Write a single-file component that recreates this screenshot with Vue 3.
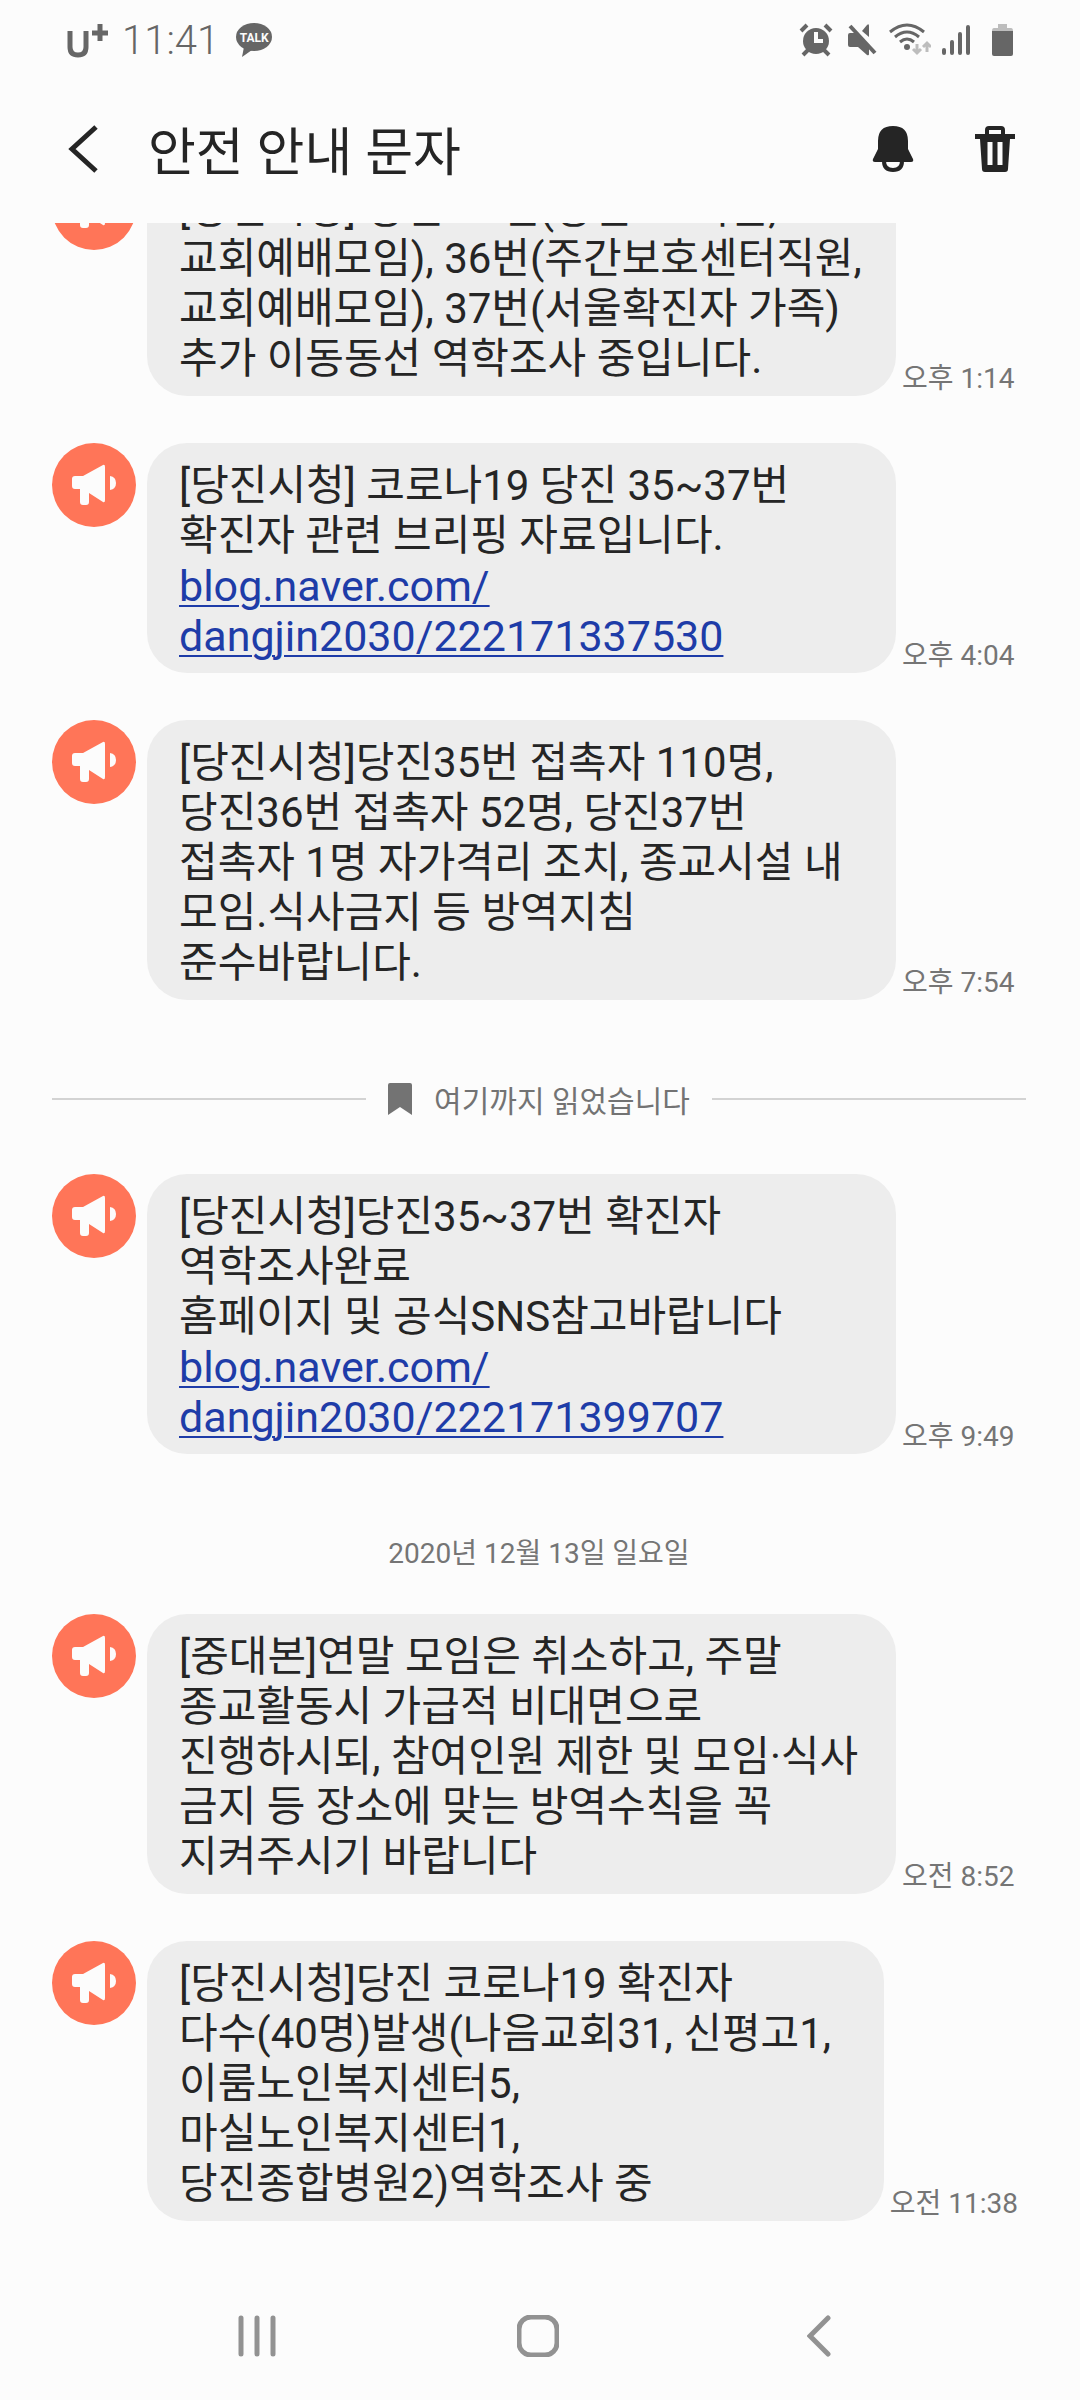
<script setup>
const feed = [
  {
    kind: 'message',
    text: '[당진시청] 당진 35번(당진 고 직원,\n교회예배모임), 36번(주간보호센터직원,\n교회예배모임), 37번(서울확진자 가족)\n추가 이동동선 역학조사 중입니다.',
    time: '오후 1:14',
  },
  {
    kind: 'message',
    text: '[당진시청] 코로나19 당진 35~37번\n확진자 관련 브리핑 자료입니다.',
    link: ['blog.naver.com/', 'dangjin2030/222171337530'],
    time: '오후 4:04',
  },
  {
    kind: 'message',
    text: '[당진시청]당진35번 접촉자 110명,\n당진36번 접촉자 52명, 당진37번\n접촉자 1명 자가격리 조치, 종교시설 내\n모임.식사금지 등 방역지침\n준수바랍니다.',
    time: '오후 7:54',
  },
  { kind: 'read', text: '여기까지 읽었습니다' },
  {
    kind: 'message',
    text: '[당진시청]당진35~37번 확진자\n역학조사완료\n홈페이지 및 공식SNS참고바랍니다',
    link: ['blog.naver.com/', 'dangjin2030/222171399707'],
    time: '오후 9:49',
  },
  { kind: 'date', text: '2020년 12월 13일 일요일' },
  {
    kind: 'message',
    text: '[중대본]연말 모임은 취소하고, 주말\n종교활동시 가급적 비대면으로\n진행하시되, 참여인원 제한 및 모임·식사\n금지 등 장소에 맞는 방역수칙을 꼭\n지켜주시기 바랍니다',
    time: '오전 8:52',
  },
  {
    kind: 'message',
    text: '[당진시청]당진 코로나19 확진자\n다수(40명)발생(나음교회31, 신평고1,\n이룸노인복지센터5,\n마실노인복지센터1,\n당진종합병원2)역학조사 중',
    time: '오전 11:38',
  },
]
</script>

<template>
  <div class="screen">
    <div class="status">
      <div class="status-left">
        <svg width="42" height="36" viewBox="0 0 42 36" role="img" aria-label="U+">
          <path d="M3 9V25Q3 33 11 33T19 25V9" fill="none" stroke="#666" stroke-width="5" />
          <path d="M33 2V19M25 11H41" fill="none" stroke="#666" stroke-width="5" />
        </svg>
        <span class="clock">11:41</span>
        <span class="talk">
          <svg width="36" height="34" viewBox="0 0 36 34" aria-hidden="true">
            <ellipse cx="18" cy="14" rx="18" ry="14" fill="#666" />
            <path d="M8 24L6 34L16 27Z" fill="#666" />
          </svg>
          <b>TALK</b>
        </span>
      </div>
      <div class="status-right">
        <svg class="alarm" width="34" height="34" viewBox="0 0 34 34" aria-hidden="true">
          <circle cx="17" cy="18" r="13" fill="#666" />
          <path d="M2 8L8 2M26 2L32 8M9 27L4 32M25 27L30 32" stroke="#666" stroke-width="4" />
          <path d="M17 9V18H24" fill="none" stroke="#fcfcfc" stroke-width="4" />
        </svg>
        <svg width="30" height="34" viewBox="0 0 30 34" aria-hidden="true">
          <path d="M2 10H8L21 23V31Q21 33 19 32L10 24H2Q0 24 0 22V12Q0 10 2 10Z" fill="#666" />
          <path d="M14 8L19 2Q21 0 21 3V14Z" fill="#666" />
          <path d="M2 3L27 30" stroke="#666" stroke-width="4" />
        </svg>
        <svg width="42" height="34" viewBox="0 0 42 34" aria-hidden="true">
          <g fill="none" stroke="#666" stroke-width="3">
            <path d="M1 9Q18 -5 35 9" />
            <path d="M6 14Q18 4 30 14" />
            <path d="M11 19Q18 13 25 19" />
          </g>
          <circle cx="18" cy="24" r="3" fill="#666" />
          <path d="M28 21V30M24 26L28 30L32 26M38 29V20M34 24L38 20L42 24" fill="none" stroke="#bdbdbd" stroke-width="3" />
        </svg>
        <svg width="28" height="34" viewBox="0 0 28 34" aria-hidden="true">
          <path d="M2 27V30M10 19V30M18 11V30M26 4V30" stroke="#666" stroke-width="4" stroke-linecap="round" />
        </svg>
        <svg class="battery" width="21" height="34" viewBox="0 0 21 34" aria-hidden="true">
          <path d="M6 1H15V5H19Q21 5 21 8H0Q0 5 2 5H6Z" fill="#bdbdbd" />
          <path d="M0 8H21V31Q21 33 19 33H2Q0 33 0 31Z" fill="#666" />
        </svg>
      </div>
    </div>

    <header class="bar">
      <button type="button" aria-label="뒤로">
        <svg width="32" height="48" viewBox="0 0 32 48">
          <path d="M28 2L4 24L28 46" fill="none" stroke="#252525" stroke-width="5" />
        </svg>
      </button>
      <h1>안전 안내 문자</h1>
      <button type="button" class="bell" aria-label="알림">
        <svg width="42" height="48" viewBox="0 0 42 48">
          <path d="M6 16Q6 1 21 1T36 16V24L41 34Q42 37 39 37H3Q0 37 1 34L6 24Z" fill="#252525" />
          <path d="M12 36Q12 45 21 45T30 36" fill="none" stroke="#252525" stroke-width="4" />
        </svg>
      </button>
      <button type="button" aria-label="삭제">
        <svg width="42" height="48" viewBox="0 0 42 48">
          <path d="M13 10V5Q13 3 15 3H27Q29 3 29 5V10" fill="none" stroke="#252525" stroke-width="4" />
          <path d="M1 9H41V14H36L34 44Q34 47 31 47H11Q8 47 8 44L6 14H1Z" fill="#252525" />
          <path d="M16 17V40M26 17V40" stroke="#fcfcfc" stroke-width="5" />
        </svg>
      </button>
    </header>

    <main class="feed">
      <template v-for="(item, i) in feed" :key="i">
        <article v-if="item.kind === 'message'" class="message">
          <svg width="84" height="84" viewBox="0 0 84 84" aria-hidden="true">
            <circle cx="42" cy="42" r="42" fill="#ff7558" />
            <path d="M23 33H31L51 22Q53 21 53 24V57Q53 60 51 59L37 50V59Q37 62 34 62H31Q28 62 28 59V46H23Q20 46 20 43V36Q20 33 23 33Z" fill="#fcfcfc" />
            <path d="M58 33Q64 34 64 40T58 47Z" fill="#fcfcfc" />
          </svg>
          <div class="bubble">
            <p>{{ item.text }}</p>
            <a v-if="item.link" :href="'https://' + item.link.join('')">{{ item.link[0] }}<br>{{ item.link[1] }}</a>
          </div>
          <time>{{ item.time }}</time>
        </article>
        <div v-else-if="item.kind === 'read'" class="read">
          <svg width="24" height="32" viewBox="0 0 24 32" aria-hidden="true">
            <path d="M2 0H22Q24 0 24 2V32L12 24L0 32V2Q0 0 2 0Z" fill="#737373" />
          </svg>
          <span>{{ item.text }}</span>
        </div>
        <div v-else class="date">{{ item.text }}</div>
      </template>
    </main>

    <nav class="nav">
      <button type="button" aria-label="최근 앱">
        <svg width="38" height="42" viewBox="0 0 38 42">
          <path d="M3 3V39M19 3V39M35 3V39" stroke="#929292" stroke-width="5" stroke-linecap="round" />
        </svg>
      </button>
      <button type="button" aria-label="홈">
        <svg width="42" height="42" viewBox="0 0 42 42">
          <rect x="2" y="2" width="38" height="38" rx="12" fill="none" stroke="#929292" stroke-width="5" />
        </svg>
      </button>
      <button type="button" aria-label="뒤로 가기">
        <svg width="24" height="42" viewBox="0 0 24 42">
          <path d="M21 3L3 21L21 39" fill="none" stroke="#929292" stroke-width="5" stroke-linecap="round" />
        </svg>
      </button>
    </nav>
  </div>
</template>

<style>
body {
  background: #fcfcfc;
}
</style>

<style scoped>
.screen {
  display: flex;
  flex-direction: column;
  height: 100vh;
  background: #fcfcfc;
  color: #252525;
  font-family: Roboto, "Noto Sans CJK KR", sans-serif;
}
button {
  display: flex;
  align-items: center;
  justify-content: center;
  padding: 0;
  border: 0;
  background: none;
}
svg {
  flex: none;
}
.status {
  display: flex;
  align-items: center;
  justify-content: space-between;
  height: 80px;
  padding: 0 67px;
  color: #666;
}
.status-left {
  display: flex;
  align-items: center;
  gap: 13px;
}
.clock {
  padding-top: 2px;
  font-size: 40px;
  font-weight: 300;
  line-height: 48px;
}
.talk {
  position: relative;
  display: flex;
  margin-left: 4px;
}
.talk b {
  position: absolute;
  top: 7px;
  left: 0;
  width: 36px;
  color: #fcfcfc;
  font-size: 12px;
  line-height: 16px;
  text-align: center;
}
.status-right {
  display: flex;
  align-items: center;
  gap: 11px;
}
.alarm {
  margin-right: 4px;
}
.battery {
  margin-left: 11px;
}
.bar {
  display: flex;
  align-items: center;
  height: 137px;
  padding: 0 64px 6px 68px;
}
h1 {
  flex: 1;
  margin: 0 0 0 48px;
  padding-top: 10px;
  font-size: 52px;
  font-weight: 400;
  line-height: 64px;
}
.bell {
  margin-right: 60px;
}
.feed {
  display: flex;
  flex: 1;
  flex-direction: column;
  justify-content: flex-end;
  min-height: 0;
  padding: 0 62px 51px 52px;
  overflow: hidden;
}
.message {
  display: flex;
  align-items: flex-start;
}
.message + .message {
  margin-top: 47px;
}
.bubble {
  flex: 1;
  margin-left: 11px;
  padding: 18px 0 12px 32px;
  border-radius: 40px;
  background: #ededed;
  font-size: 42px;
  line-height: 50px;
}
.bubble p {
  margin: 0;
  white-space: pre-line;
  word-break: keep-all;
}
.bubble a {
  display: block;
  color: #1e3ca8;
  font-size: 43px;
  text-decoration-thickness: 2px;
  text-underline-offset: 4px;
}
time {
  align-self: flex-end;
  min-width: 116px;
  margin-left: 6px;
  font-size: 28px;
  line-height: 34px;
  color: #757575;
  white-space: nowrap;
}
.read {
  display: flex;
  align-items: center;
  gap: 22px;
  height: 40px;
  margin: 79px -8px 55px 0;
  color: #737373;
  font-size: 30px;
}
.read::before,
.read::after {
  content: "";
  flex: 1;
  height: 2px;
  background: #d3d3d3;
}
.date {
  margin: 80px -8px 40px 0;
  color: #757575;
  font-size: 28px;
  line-height: 40px;
  text-align: center;
}
.nav {
  display: flex;
  height: 128px;
  margin-right: 4px;
  padding: 0 calc(11% - 2px);
}
.nav button {
  flex: 1;
}
</style>
